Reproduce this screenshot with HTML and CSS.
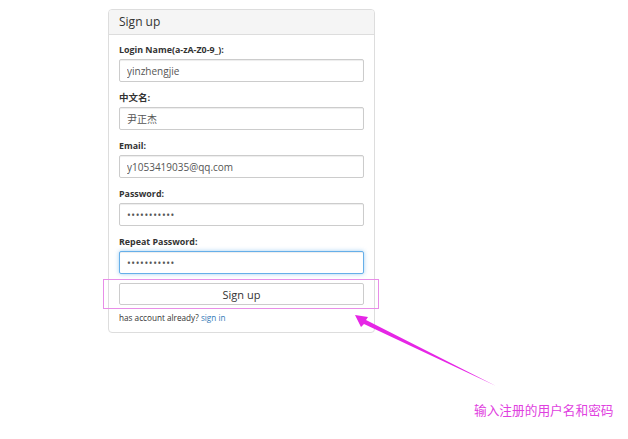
FILE: index.html
```html
<!DOCTYPE html>
<html lang="zh-CN">
<head>
    <meta charset="UTF-8">
    <title>Sign up</title>
    <link rel="stylesheet" href="styles.css">
</head>
<body>
<div class="page">
    <div class="panel">
        <div class="panel-heading">Sign up</div>
        <form class="panel-body">
            <div class="form-group">
                <label for="loginName">Login Name(a-zA-Z0-9_):</label>
                <input type="text" id="loginName" class="form-control" value="yinzhengjie">
            </div>
            <div class="form-group">
                <label for="cnName" class="label-cn">中文名:</label>
                <input type="text" id="cnName" class="form-control" value="尹正杰">
            </div>
            <div class="form-group">
                <label for="email">Email:</label>
                <input type="text" id="email" class="form-control" value="y1053419035@qq.com">
            </div>
            <div class="form-group">
                <label for="password">Password:</label>
                <input type="password" id="password" class="form-control" value="12345678901">
            </div>
            <div class="form-group">
                <label for="repeat">Repeat Password:</label>
                <input type="password" id="repeat" class="form-control focused" value="12345678901">
            </div>
            <div class="btn-wrap">
                <button type="button" class="btn">Sign up</button>
                <div class="highlight"></div>
            </div>
            <p class="signin">has account already? <a href="#">sign in</a></p>
        </form>
    </div>

    <svg class="arrow" width="628" height="439" viewBox="0 0 628 439">
        <polygon points="355,315 368,317 366,320 496,386 364,324 361,327" fill="#e626e6"/>
    </svg>
    <div class="note">输入注册的用户名和密码</div>
</div>
</body>
</html>
```

FILE: styles.css
```css
body {
    margin: 0;
    background-color: #fff;
    font-family: "Open Sans", "Noto Sans CJK SC", sans-serif;
    color: #333;
}

.page {
    position: relative;
    width: 628px;
    height: 439px;
    padding: 9px 0 0 108px;
    box-sizing: border-box;
}

.panel {
    width: 267px;
    border: 1px solid #ddd;
    border-radius: 4px;
    box-sizing: border-box;
}

.panel-heading {
    height: 25px;
    line-height: 24px;
    padding: 0 10px;
    font-size: 12px;
    color: #333;
    background-color: #f5f5f5;
    border-bottom: 1px solid #ddd;
    border-radius: 3px 3px 0 0;
    box-sizing: border-box;
}

.panel-body {
    padding: 8px 10px 7px;
    margin: 0;
}

.form-group {
    margin-bottom: 9px;
}

label {
    display: block;
    font-size: 8.9px;
    font-weight: 700;
    line-height: 14px;
    margin-bottom: 2px;
    color: #333;
}

.label-cn {
    font-size: 9.5px;
}

.form-control {
    display: block;
    width: 100%;
    height: 23px;
    padding: 0 7px;
    font-family: inherit;
    font-size: 10px;
    color: #555;
    border: 1px solid #ccc;
    border-radius: 2px;
    box-shadow: inset 0 1px 1px rgba(0, 0, 0, 0.075);
    box-sizing: border-box;
    outline: none;
}

.form-control[type="password"] {
    font-size: 10px;
    letter-spacing: 0.6px;
}

.form-control.focused {
    border-color: #66afe9;
    box-shadow: inset 0 1px 1px rgba(0, 0, 0, 0.075), 0 0 4px rgba(102, 175, 233, 0.6);
}

.btn-wrap {
    position: relative;
}

.btn {
    display: block;
    width: 100%;
    height: 22px;
    font-family: inherit;
    font-size: 11px;
    color: #333;
    background-color: #fff;
    border: 1px solid #ccc;
    border-radius: 2px;
    cursor: pointer;
}

.highlight {
    position: absolute;
    top: -4px;
    bottom: -4px;
    left: -16px;
    right: -15px;
    border: 1px solid #e88ee8;
}

.signin {
    margin: 6px 0 0;
    font-size: 8.2px;
    line-height: 14px;
    color: #333;
}

.signin a {
    color: #337ab7;
    text-decoration: none;
}

.arrow {
    position: absolute;
    left: 0;
    top: 0;
}

.note {
    position: absolute;
    left: 474px;
    top: 401px;
    font-size: 12.7px;
    line-height: 18px;
    color: #e040e0;
}
```
